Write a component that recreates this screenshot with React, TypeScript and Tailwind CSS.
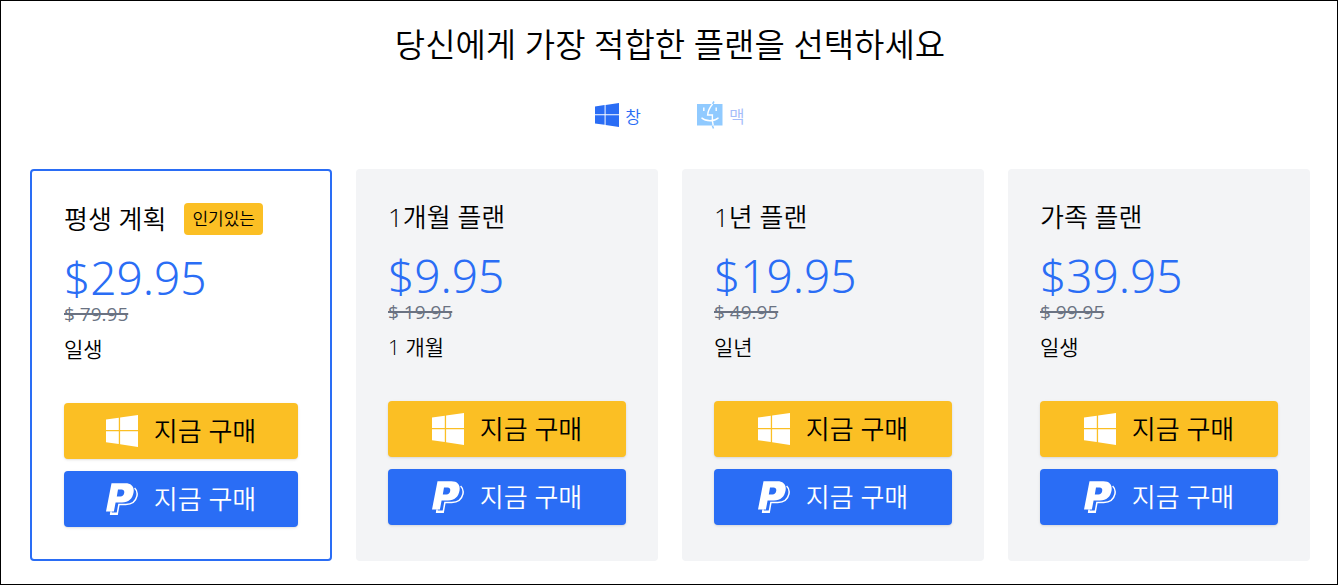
import React from "react";

type Plan = {
  name: string;
  price: string;
  oldPrice: string;
  term: string;
  badge?: string;
};

const plans: Plan[] = [
  { name: "평생 계획", price: "$29.95", oldPrice: "$ 79.95", term: "일생", badge: "인기있는" },
  { name: "1개월 플랜", price: "$9.95", oldPrice: "$ 19.95", term: "1 개월" },
  { name: "1년 플랜", price: "$19.95", oldPrice: "$ 49.95", term: "일년" },
  { name: "가족 플랜", price: "$39.95", oldPrice: "$ 99.95", term: "일생" },
];

function WindowsIcon({ className }: { className: string }) {
  return (
    <svg viewBox="0 0 32 32" className={className} fill="currentColor" aria-hidden="true">
      <path d="M0 4.500 12.800 2.700V15H0zM14.100 2.500 32 0v15H14.100zM0 16.300h12.800v12.600L0 27.200zM14.100 16.300H32V32l-17.900-2.700z" />
    </svg>
  );
}

function PaypalIcon({ className }: { className: string }) {
  return (
    <svg viewBox="0 0 32 32" className={className} aria-hidden="true">
      <path
        fill="currentColor"
        fillRule="evenodd"
        d="M5.500.2h13.800c6 0 9.200 3.400 8.300 9-1.100 6.700-5 10.200-11.600 10.200H9.600L7.900 28.500H0zM12 6.500 10.800 13.400h3.600c2.100 0 3.400-1.200 3.800-3.400.4-2.200-.6-3.500-2.700-3.500z"
      />
      <path
        fill="none"
        stroke="currentColor"
        strokeWidth="1.500"
        d="M28.600 5c2.300 2.100 3 4.900 2.300 8.200-1.300 5.700-5.200 8.300-11.200 8.300h-6.800l-1.700 9.700H4.700l.5-2.900"
      />
      <path fill="currentColor" d="M4.200 29.600h7.400l-.4 2.300H4z" />
    </svg>
  );
}

function FinderIcon({ className }: { className: string }) {
  return (
    <svg viewBox="0 0 26 28" className={className} fill="none" aria-hidden="true">
      <path fill="currentColor" d="M0 3h25.500v21.500H0z" />
      <path stroke="currentColor" strokeWidth="1.500" d="M17 .5 15.500 3M15.300 24.500l1.200 3" />
      <path
        stroke="white"
        strokeWidth="1.400"
        d="M15.600 3c-3 3.500-4.600 7-5 11h4.800c-.3 4 0 7.500.8 10.500M4.500 16.800c4.500 4 12.500 4 17 0M6.800 6.500v3.500M19.200 6.500v3.500"
      />
    </svg>
  );
}

function PlanCard({ plan }: { plan: Plan }) {
  const frame = plan.badge ? "border-2 border-[#2a6df5] bg-white" : "bg-gray-100";
  return (
    <article className={`flex flex-col rounded p-8 ${frame}`}>
      <div className="flex h-8 items-center gap-[18px]">
        <h2 className="whitespace-nowrap text-[26px] leading-8">{plan.name}</h2>
        {plan.badge && (
          <span className="flex h-8 items-center whitespace-nowrap rounded bg-[#fbbf24] px-2 text-[17px]">
            {plan.badge}
          </span>
        )}
      </div>
      <p className="mt-4 font-['Noto_Sans','Open_Sans',sans-serif] text-[46px] leading-[52px] text-[#2a6df5]">{plan.price}</p>
      <p className="text-[19px] font-normal leading-[22px] text-gray-500 line-through decoration-2">{plan.oldPrice}</p>
      <p className="mt-[10px] text-[21px] leading-7">{plan.term}</p>
      <div className="mt-10 flex flex-col gap-3">
        <button type="button" className="flex h-14 items-center justify-center gap-4 rounded bg-[#fbbf24] text-[26px] shadow-sm">
          <WindowsIcon className="size-8 text-white" />
          지금 구매
        </button>
        <button type="button" className="flex h-14 items-center justify-center gap-4 rounded bg-[#2a6df5] text-[26px] text-white shadow-sm">
          <PaypalIcon className="size-8" />
          지금 구매
        </button>
      </div>
    </article>
  );
}

export default function App() {
  return (
    <main className="border border-black bg-white pb-[23px] pl-[29px] pr-[27px] pt-6 font-['Open_Sans','Noto_Sans_CJK_KR',sans-serif] font-[350] text-black">
      <h1 className="text-center text-[33px] leading-10">당신에게 가장 적합한 플랜을 선택하세요</h1>
      <div className="mt-[34px] flex h-8 items-center justify-center gap-14">
        <button type="button" className="flex items-center gap-1.5 text-[17px] text-[#2a6df5]">
          <WindowsIcon className="size-6" />
          <span className="pt-1">창</span>
        </button>
        <button type="button" className="flex items-center gap-1.5 text-[17px] text-[#a5bdfa]">
          <FinderIcon className="h-7 w-[26px] text-[#90caff]" />
          <span className="pt-1">맥</span>
        </button>
      </div>
      <section className="mt-[38px] grid grid-cols-4 gap-6">
        {plans.map((plan) => (
          <PlanCard key={plan.name} plan={plan} />
        ))}
      </section>
    </main>
  );
}
